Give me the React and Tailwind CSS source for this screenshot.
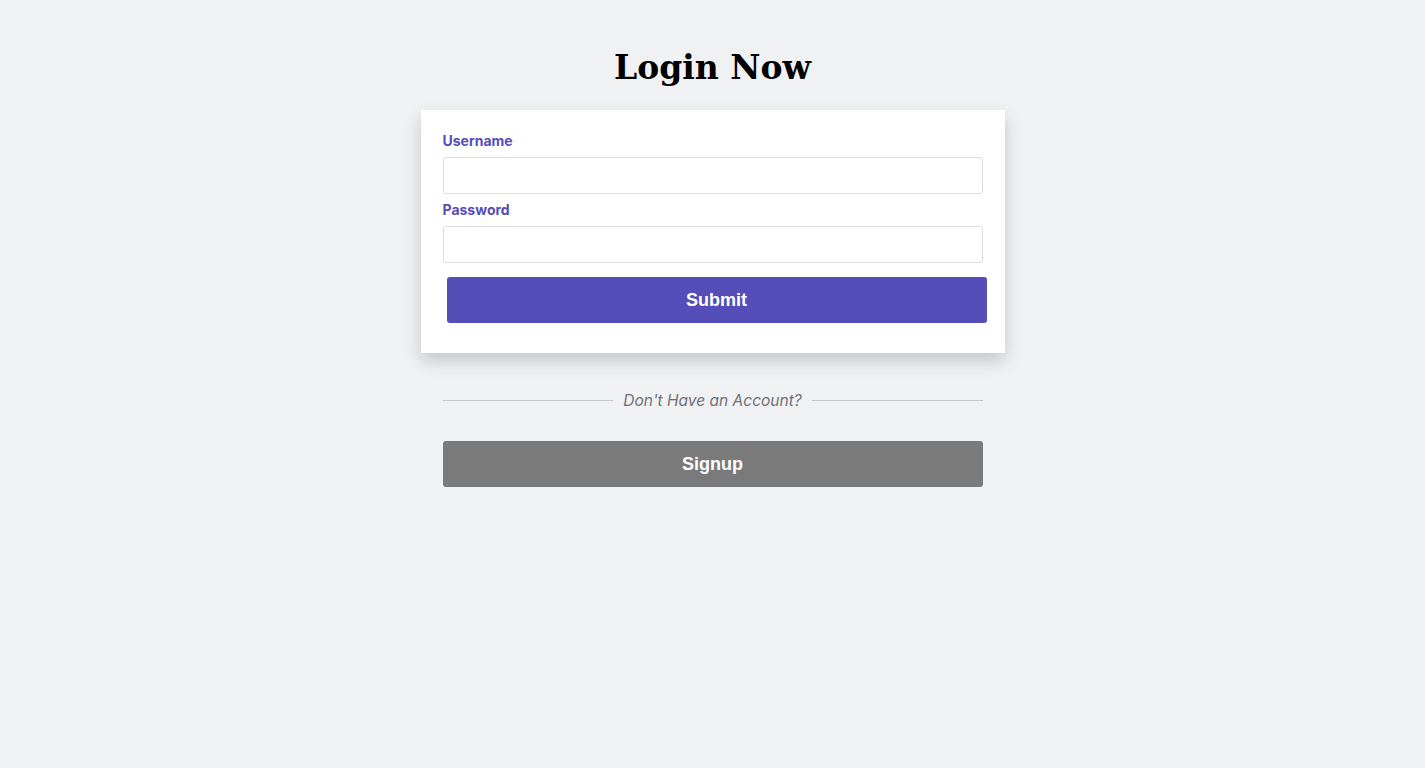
import React from 'react';

const Field = ({ label, type }) => (
  <div className="flex flex-col">
    <label className="text-[14px] font-bold text-[#554db8] leading-[18px] mb-[7px]">{label}</label>
    <input
      type={type}
      className="h-[37px] w-full bg-white border border-[#dcdde0] rounded-[3px] px-3 outline-none"
    />
  </div>
);

export default function App() {
  return (
    <div className="min-h-screen bg-[#f0f1f3] flex flex-col items-center font-['Inter',sans-serif]">
      <h1 className="mt-[47px] h-[42px] text-[33px] leading-[42px] font-bold text-black font-['DejaVu_Serif',serif]">
        Login Now
      </h1>

      <div className="mt-[21px] w-[584px] bg-white px-[22px] pt-[22px] pb-[30px] shadow-[0_8px_16px_rgba(0,0,0,0.18)]">
        <div className="flex flex-col gap-[7px]">
          <Field label="Username" type="text" />
          <Field label="Password" type="password" />
        </div>
        <button className="mt-[14px] ml-[4px] w-[540px] h-[46px] rounded-[3px] bg-[#554db8] text-white text-[18px] font-bold font-['Liberation_Sans',sans-serif]">
          Submit
        </button>
      </div>

      <div className="mt-[36px] w-[540px] flex items-center gap-[10px]">
        <div className="flex-1 h-px bg-[#c4c5c8]" />
        <span className="italic text-[15.5px] text-[#6f7075]">Don't Have an Account?</span>
        <div className="flex-1 h-px bg-[#c4c5c8]" />
      </div>

      <button className="mt-[29px] w-[540px] h-[46px] rounded-[3px] bg-[#7a7a7a] text-white text-[18px] font-bold font-['Liberation_Sans',sans-serif]">
        Signup
      </button>
    </div>
  );
}
